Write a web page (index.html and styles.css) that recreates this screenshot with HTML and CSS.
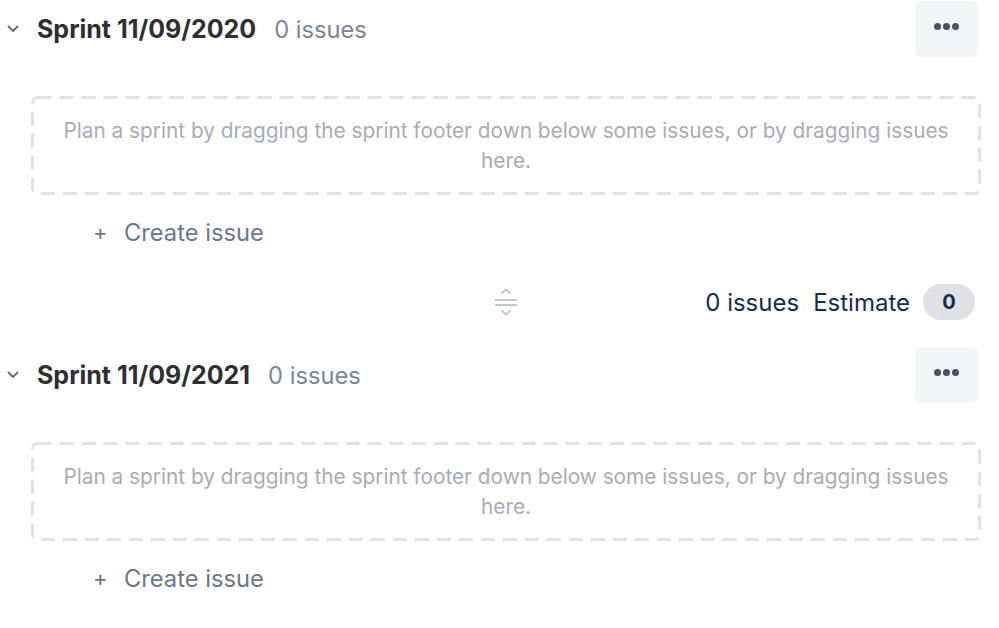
FILE: index.html
```html
<!DOCTYPE html>
<html lang="en">
<head>
  <meta charset="UTF-8" />
  <meta name="viewport" content="width=device-width, initial-scale=1.0">
  <title>Backlog - Sprints</title>
  <link rel="stylesheet" href="styles.css">
</head>
<body>
  <div class="backlog">

    <div class="sprint">
      <div class="sprint-header">
        <svg class="chevron" width="12" height="8" viewBox="0 0 12 8"><path d="M1.5 1.5 L6 6 L10.5 1.5" fill="none" stroke="#5e6c84" stroke-width="1.8" stroke-linecap="round" stroke-linejoin="round"/></svg>
        <span class="sprint-name">Sprint 11/09/2020</span>
        <span class="sprint-count">0 issues</span>
        <button class="more-btn" aria-label="More"><span></span><span></span><span></span></button>
      </div>
      <div class="drop-zone">Plan a sprint by dragging the sprint footer down below some issues, or by dragging issues here.</div>
      <div class="create-issue"><span class="plus">+</span>Create issue</div>
      <div class="sprint-footer">
        <div></div>
        <svg class="drag-icon" width="26" height="30" viewBox="0 0 26 30"><path d="M9 6 L13 2.5 L17 6" fill="none" stroke="#c1c7d0" stroke-width="2" stroke-linecap="round" stroke-linejoin="round"/><path d="M2 13 H24 M2 18 H24" stroke="#c1c7d0" stroke-width="2.2"/><path d="M9 24 L13 27.5 L17 24" fill="none" stroke="#c1c7d0" stroke-width="2" stroke-linecap="round" stroke-linejoin="round"/></svg>
        <div class="stats">
          <span>0 issues</span>
          <span>Estimate</span>
          <span class="badge">0</span>
        </div>
      </div>
    </div>

    <div class="sprint">
      <div class="sprint-header">
        <svg class="chevron" width="12" height="8" viewBox="0 0 12 8"><path d="M1.5 1.5 L6 6 L10.5 1.5" fill="none" stroke="#5e6c84" stroke-width="1.8" stroke-linecap="round" stroke-linejoin="round"/></svg>
        <span class="sprint-name">Sprint 11/09/2021</span>
        <span class="sprint-count">0 issues</span>
        <button class="more-btn" aria-label="More"><span></span><span></span><span></span></button>
      </div>
      <div class="drop-zone">Plan a sprint by dragging the sprint footer down below some issues, or by dragging issues here.</div>
      <div class="create-issue"><span class="plus">+</span>Create issue</div>
    </div>

  </div>
</body>
</html>
```

FILE: styles.css
```css
body {
  margin: 0;
  background: #fff;
  font-family: Inter, "Noto Sans", sans-serif;
  color: #172b4d;
}
.backlog {
  padding-top: 1px;
}
.sprint {
  margin-bottom: 27px;
}
.sprint-header {
  display: flex;
  align-items: center;
  height: 56px;
  padding: 0 21px 0 7px;
}
.chevron {
  margin-right: 18px;
}
.sprint-name {
  font-size: 25px;
  font-weight: 700;
  color: #2f2f33;
  margin-right: 18px;
}
.sprint-count {
  font-size: 23.7px;
  color: #7a869a;
}
.more-btn {
  margin-left: auto;
  width: 63px;
  height: 56px;
  border: none;
  border-radius: 6px;
  background: #f4f5f7;
  display: flex;
  align-items: center;
  justify-content: center;
  gap: 2px;
  padding: 0 0 6px;
  cursor: pointer;
}
.more-btn span {
  width: 7px;
  height: 7px;
  border-radius: 50%;
  background: #42526e;
}
/* dashed outline drawn as svg so the dash length matches */
.drop-zone {
  margin: 39px 18px 0 31px;
  padding: 20px 24px 19px;
  border-radius: 6px;
  background-image: url("data:image/svg+xml,%3Csvg xmlns='http://www.w3.org/2000/svg' width='100%25' height='100%25'%3E%3Crect x='1.5' y='1.5' width='calc(100%25 - 3px)' height='calc(100%25 - 3px)' rx='5' fill='none' stroke='%23dfe1e6' stroke-width='3' stroke-dasharray='14 8'/%3E%3C/svg%3E");
  font-size: 20.8px;
  line-height: 30px;
  color: #a5adba;
  text-align: center;
}
.create-issue {
  display: flex;
  align-items: center;
  height: 40px;
  margin-top: 17px;
  padding-left: 93px;
  font-size: 23.7px;
  color: #6b778c;
}
.plus {
  width: 31px;
  font-size: 22px;
}
.sprint-footer {
  display: grid;
  grid-template-columns: 1fr auto 1fr;
  align-items: center;
  height: 36px;
  margin: 32px 24px 0 36px;
}
.stats {
  display: flex;
  align-items: center;
  justify-content: flex-end;
  gap: 14px;
  font-size: 24px;
  color: #172b4d;
}
.badge {
  display: inline-flex;
  align-items: center;
  justify-content: center;
  width: 52px;
  height: 36px;
  margin-left: -1px;
  border-radius: 18px;
  background: #dfe1e6;
  font-size: 20px;
  font-weight: 700;
}
```
